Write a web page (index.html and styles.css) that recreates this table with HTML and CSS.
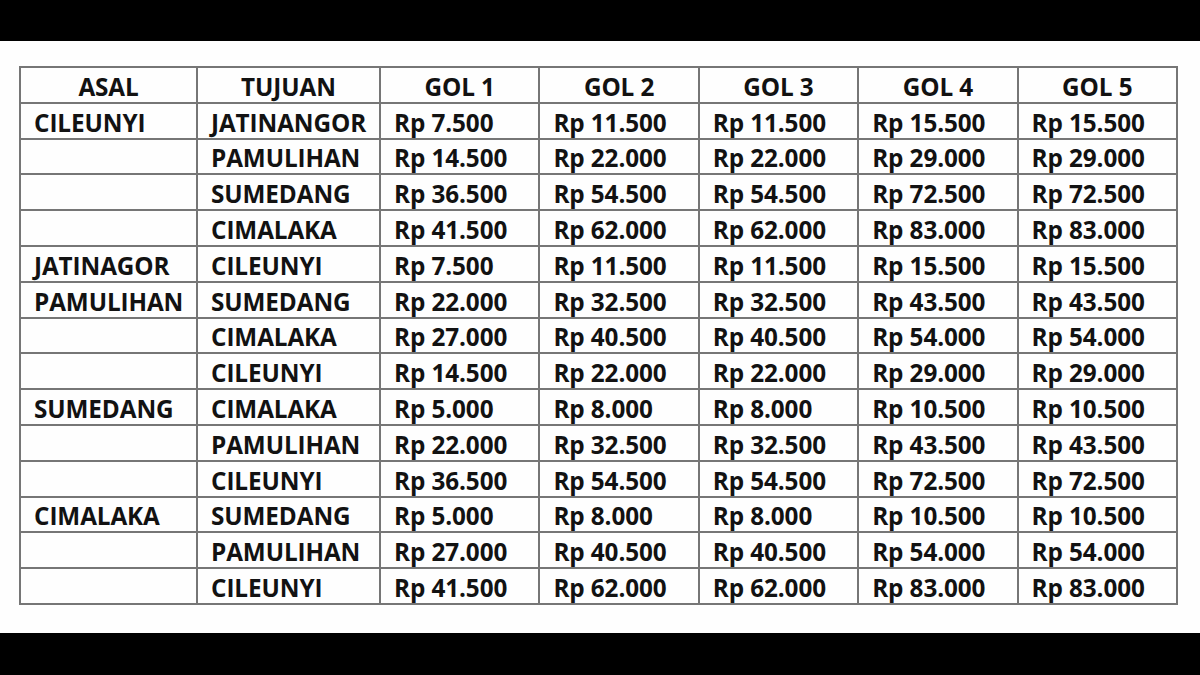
FILE: index.html
```html
<!DOCTYPE html>
<html lang="id">
<head>
<meta charset="utf-8">
<title>Tarif Tol Cisumdawu</title>
<link rel="stylesheet" href="styles.css">
</head>
<body>
<div class="bar bar-top"></div>
<main class="sheet">
  <table class="tarif">
    <colgroup>
      <col class="c-asal"><col class="c-tujuan"><col class="c-gol"><col class="c-gol"><col class="c-gol"><col class="c-gol"><col class="c-gol">
    </colgroup>
    <thead>
      <tr><th>ASAL</th><th>TUJUAN</th><th>GOL 1</th><th>GOL 2</th><th>GOL 3</th><th>GOL 4</th><th>GOL 5</th></tr>
    </thead>
    <tbody>
      <tr><td>CILEUNYI</td><td>JATINANGOR</td><td>Rp 7.500</td><td>Rp 11.500</td><td>Rp 11.500</td><td>Rp 15.500</td><td>Rp 15.500</td></tr>
      <tr><td></td><td>PAMULIHAN</td><td>Rp 14.500</td><td>Rp 22.000</td><td>Rp 22.000</td><td>Rp 29.000</td><td>Rp 29.000</td></tr>
      <tr><td></td><td>SUMEDANG</td><td>Rp 36.500</td><td>Rp 54.500</td><td>Rp 54.500</td><td>Rp 72.500</td><td>Rp 72.500</td></tr>
      <tr><td></td><td>CIMALAKA</td><td>Rp 41.500</td><td>Rp 62.000</td><td>Rp 62.000</td><td>Rp 83.000</td><td>Rp 83.000</td></tr>
      <tr><td>JATINAGOR</td><td>CILEUNYI</td><td>Rp 7.500</td><td>Rp 11.500</td><td>Rp 11.500</td><td>Rp 15.500</td><td>Rp 15.500</td></tr>
      <tr><td>PAMULIHAN</td><td>SUMEDANG</td><td>Rp 22.000</td><td>Rp 32.500</td><td>Rp 32.500</td><td>Rp 43.500</td><td>Rp 43.500</td></tr>
      <tr><td></td><td>CIMALAKA</td><td>Rp 27.000</td><td>Rp 40.500</td><td>Rp 40.500</td><td>Rp 54.000</td><td>Rp 54.000</td></tr>
      <tr><td></td><td>CILEUNYI</td><td>Rp 14.500</td><td>Rp 22.000</td><td>Rp 22.000</td><td>Rp 29.000</td><td>Rp 29.000</td></tr>
      <tr><td>SUMEDANG</td><td>CIMALAKA</td><td>Rp 5.000</td><td>Rp 8.000</td><td>Rp 8.000</td><td>Rp 10.500</td><td>Rp 10.500</td></tr>
      <tr><td></td><td>PAMULIHAN</td><td>Rp 22.000</td><td>Rp 32.500</td><td>Rp 32.500</td><td>Rp 43.500</td><td>Rp 43.500</td></tr>
      <tr><td></td><td>CILEUNYI</td><td>Rp 36.500</td><td>Rp 54.500</td><td>Rp 54.500</td><td>Rp 72.500</td><td>Rp 72.500</td></tr>
      <tr><td>CIMALAKA</td><td>SUMEDANG</td><td>Rp 5.000</td><td>Rp 8.000</td><td>Rp 8.000</td><td>Rp 10.500</td><td>Rp 10.500</td></tr>
      <tr><td></td><td>PAMULIHAN</td><td>Rp 27.000</td><td>Rp 40.500</td><td>Rp 40.500</td><td>Rp 54.000</td><td>Rp 54.000</td></tr>
      <tr><td></td><td>CILEUNYI</td><td>Rp 41.500</td><td>Rp 62.000</td><td>Rp 62.000</td><td>Rp 83.000</td><td>Rp 83.000</td></tr>
    </tbody>
  </table>
</main>
<div class="bar bar-bottom"></div>
</body>
</html>
```

FILE: styles.css
```css
html, body {
  margin: 0;
  padding: 0;
  background: #000;
  width: 1200px;
  height: 675px;
  overflow: hidden;
}
.bar-top { height: 41px; background: #000; }
.bar-bottom { height: 42px; background: #000; }
.sheet {
  height: 592px;
  background: #fefefe;
  box-sizing: border-box;
  padding: 25px 0 0 19px;
}
.tarif {
  border-collapse: collapse;
  table-layout: fixed;
  width: 1157px;
  font-family: "Open Sans", "Liberation Sans", sans-serif;
  font-weight: 700;
  font-size: 24.3px;
  color: #121212;
  letter-spacing: -0.1px;
}
.c-asal { width: 177px; }
.c-tujuan { width: 183px; }
.c-gol { width: 159.4px; }
.tarif tr { height: 35.8px; }
.tarif th, .tarif td {
  border: 2px solid #767676;
  padding: 4px 0 0 13px;
  line-height: 28px;
  white-space: nowrap;
  overflow: hidden;
}
.tarif th {
  text-align: center;
  padding-left: 0;
  font-weight: 700;
}
.tarif td { text-align: left; }
```
